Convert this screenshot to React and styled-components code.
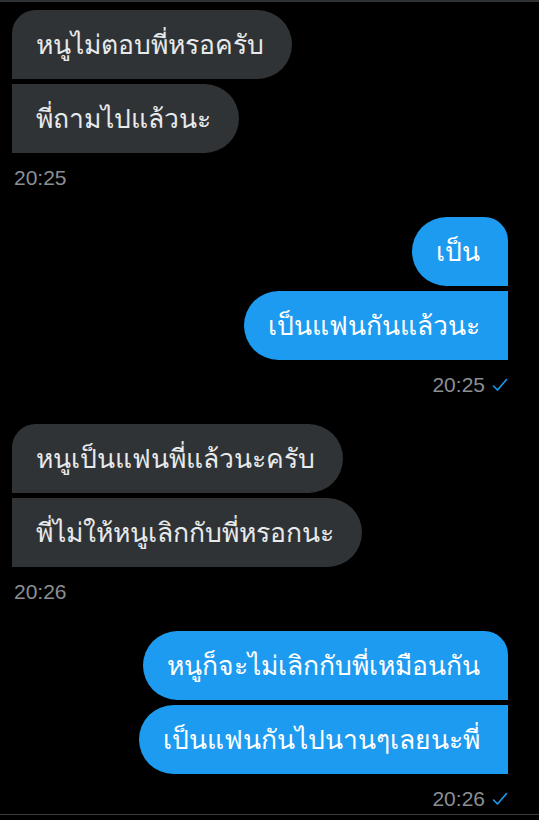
import React from 'react';
import styled, { createGlobalStyle } from 'styled-components';

const GlobalStyle = createGlobalStyle`
  html, body {
    margin: 0;
    padding: 0;
    background: #000;
  }
  * { box-sizing: border-box; }
`;

// ── Layout ─────────────────────────────────────────────
const Screen = styled.div`
  width: 539px;
  min-height: 820px;
  background: #000;
  border-top: 2px solid #2f3336;
  font-family: 'Noto Sans', 'Liberation Sans', sans-serif;
`;

const Thread = styled.div`
  display: flex;
  flex-direction: column;
  gap: 28px;
  padding: 8px 31px 4px 12px;
  border-bottom: 1px solid #3a3d40;
`;

const Group = styled.div`
  display: flex;
  flex-direction: column;
  align-items: ${p => (p.$mine ? 'flex-end' : 'flex-start')};
  gap: 5px;
`;

const Bubble = styled.div`
  height: 69px;
  display: flex;
  align-items: center;
  padding: 0 28px 0 24px;
  font-size: 26.5px;
  line-height: 33px;
  white-space: nowrap;
  color: ${p => (p.$mine ? '#ffffff' : '#e7e9ea')};
  background: ${p => (p.$mine ? '#1d9bf0' : '#2f3336')};
  border-radius: ${p => p.$radius};
`;

const Meta = styled.div`
  display: flex;
  align-items: center;
  gap: 7px;
  margin-top: 9px;
  height: 22px;
  padding-left: 2px;
  font-family: 'Liberation Sans', Arial, sans-serif;
  font-size: 21px;
  color: #8b8f93;
`;

const Check = () => (
  <svg width="16" height="14" viewBox="0 0 16 14" fill="none">
    <path d="M1.5 8 L5.5 12 L14.5 1.5" stroke="#1d9bf0" strokeWidth="1.6" strokeLinecap="round" strokeLinejoin="round" />
  </svg>
);

// ── Data ───────────────────────────────────────────────
const groups = [
  { mine: false, time: '20:25', lines: ['หนูไม่ตอบพี่หรอครับ', 'พี่ถามไปแล้วนะ'] },
  { mine: true, time: '20:25', lines: ['เป็น', 'เป็นแฟนกันแล้วนะ'] },
  { mine: false, time: '20:26', lines: ['หนูเป็นแฟนพี่แล้วนะครับ', 'พี่ไม่ให้หนูเลิกกับพี่หรอกนะ'] },
  { mine: true, time: '20:26', lines: ['หนูก็จะไม่เลิกกับพี่เหมือนกัน', 'เป็นแฟนกันไปนานๆเลยนะพี่'] },
];

const radiusFor = (mine, first) => {
  if (mine) return first ? '35px 24px 0 35px' : '35px 0 0 35px';
  return first ? '24px 35px 35px 0' : '0 35px 35px 0';
};

// ── Component ──────────────────────────────────────────
const App = () => (
  <>
    <GlobalStyle />
    <Screen>
      <Thread>
        {groups.map((g, gi) => (
          <Group key={gi} $mine={g.mine}>
            {g.lines.map((l, i) => (
              <Bubble key={l} $mine={g.mine} $radius={radiusFor(g.mine, i === 0)}>
                {l}
              </Bubble>
            ))}
            <Meta>
              {g.time}
              {g.mine && <Check />}
            </Meta>
          </Group>
        ))}
      </Thread>
    </Screen>
  </>
);

export default App;
